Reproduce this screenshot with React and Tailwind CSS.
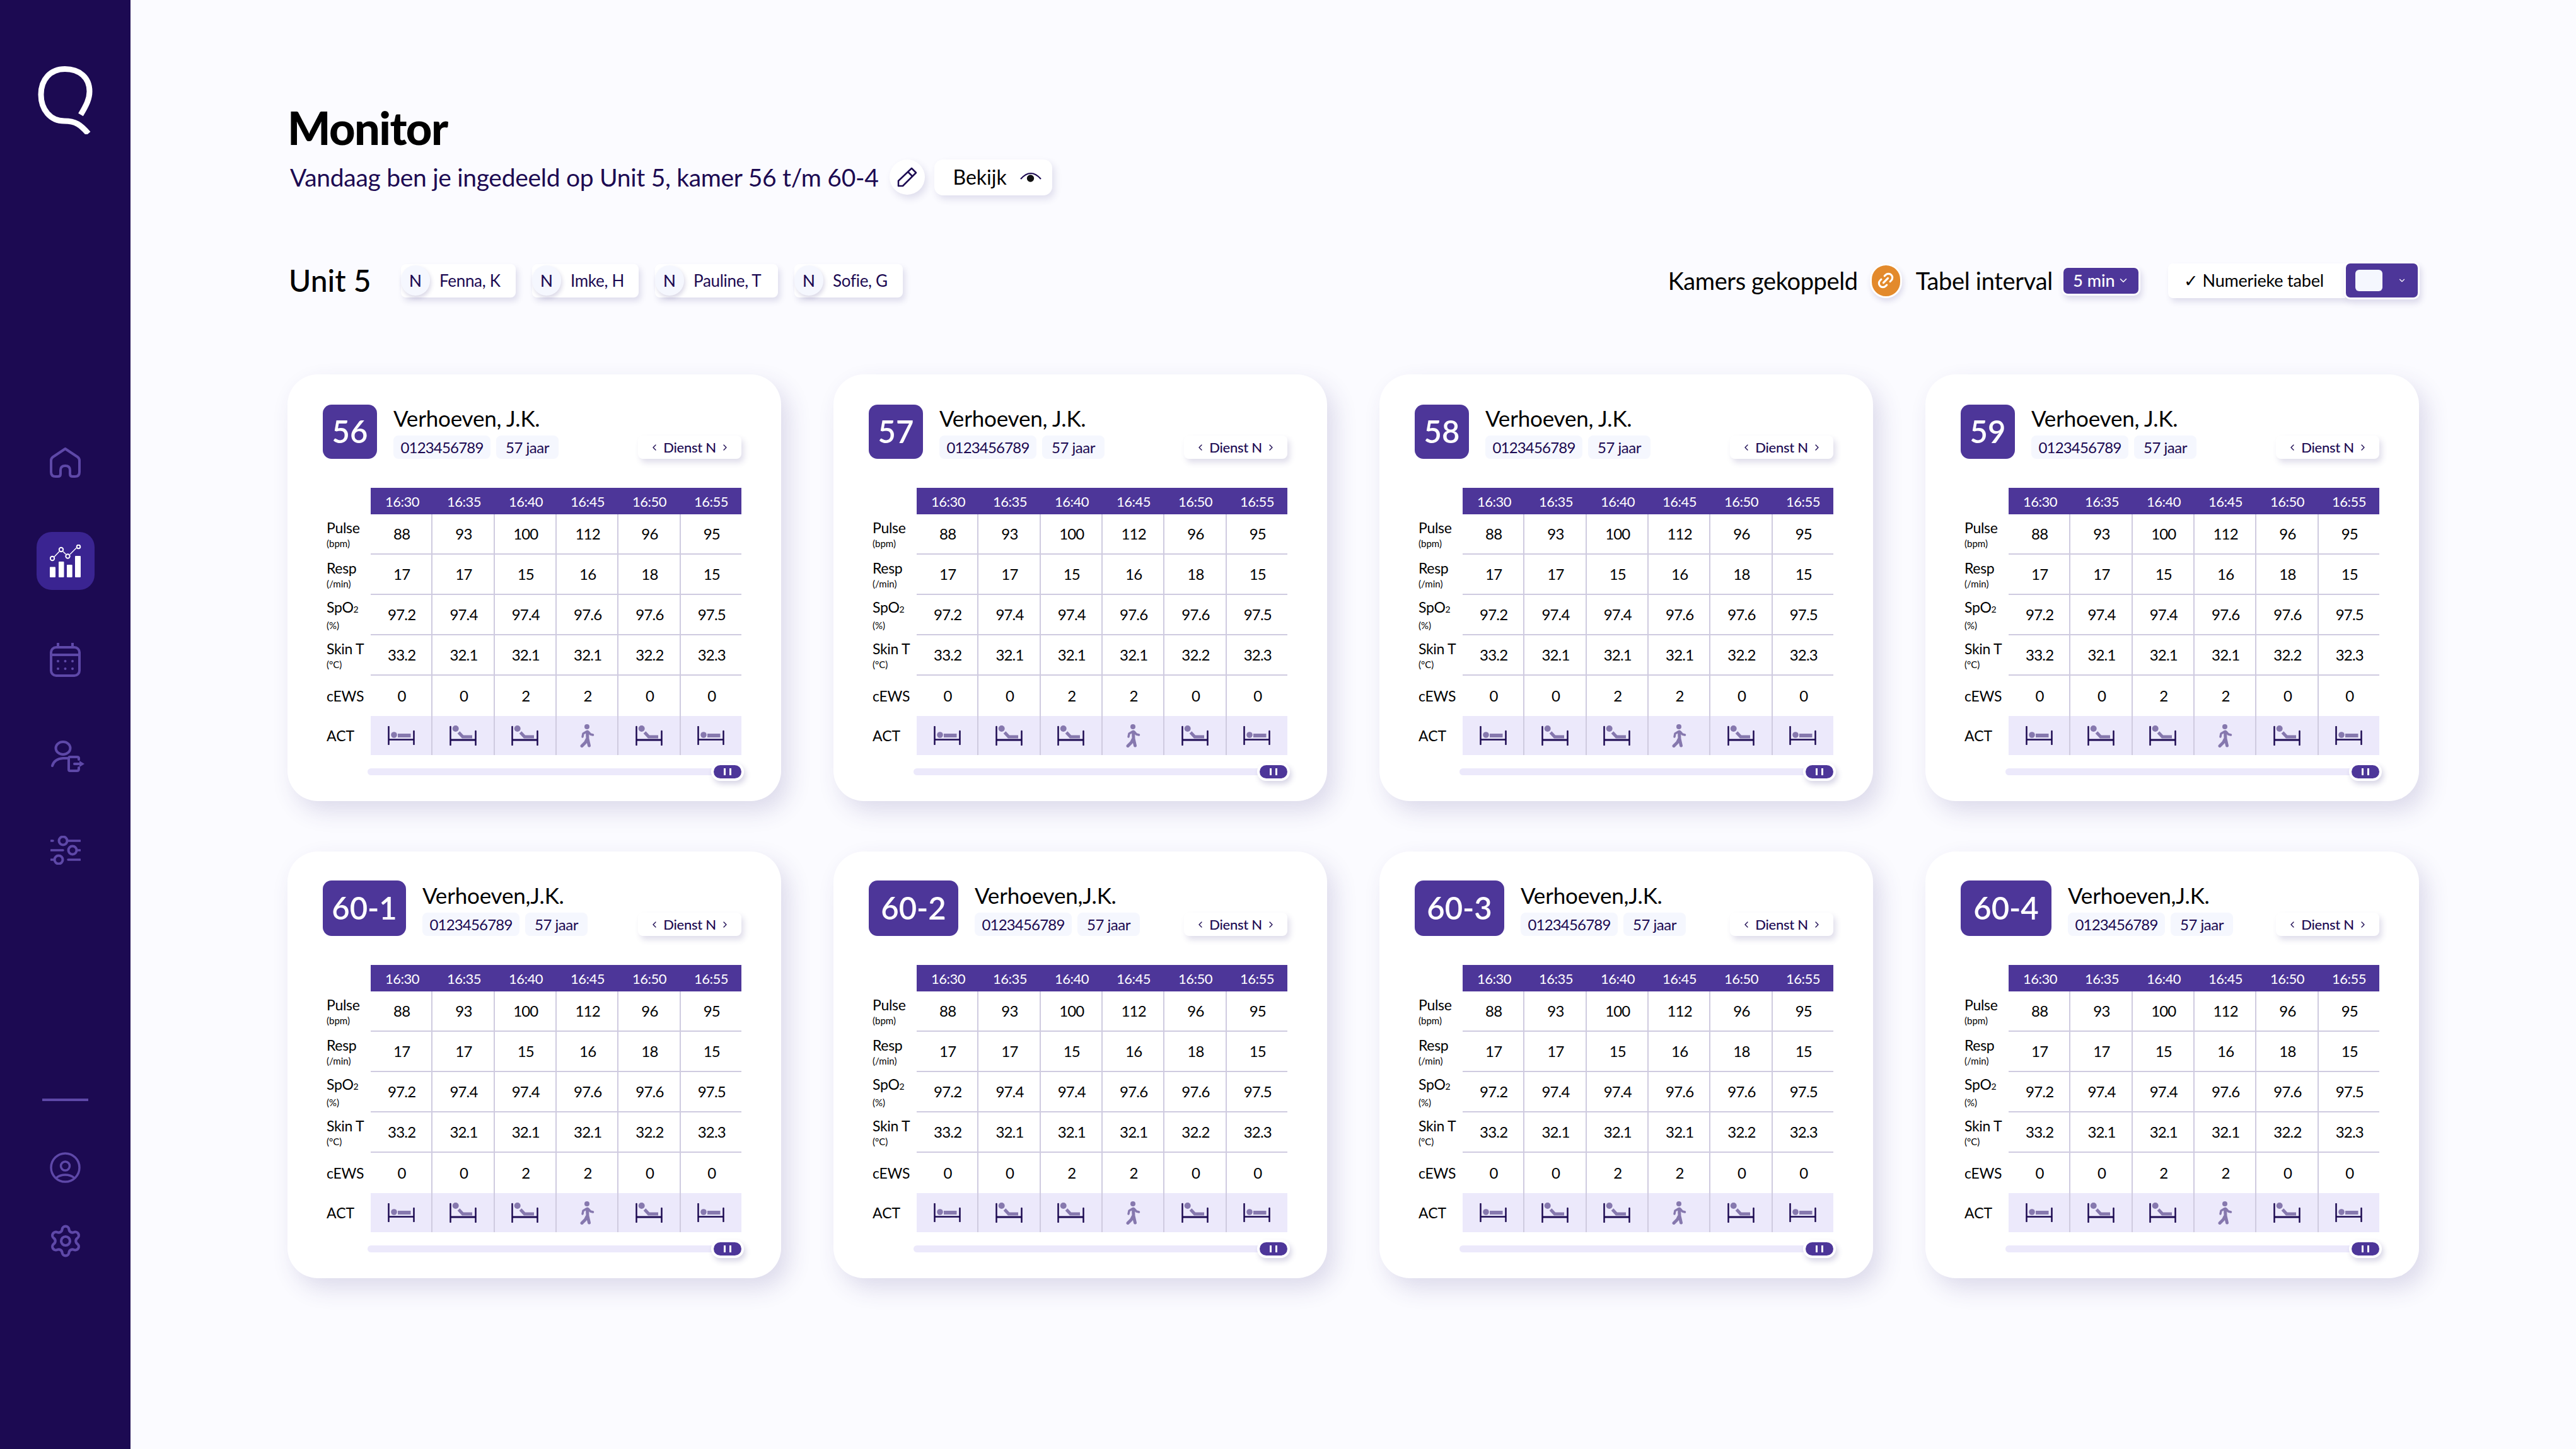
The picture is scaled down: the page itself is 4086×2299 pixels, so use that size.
import { Link2, Settings, ChevronDown, ChevronLeft, ChevronRight } from 'lucide-react';

const times = ['16:30', '16:35', '16:40', '16:45', '16:50', '16:55'];

const rows = [
  { label: 'Pulse', unit: '(bpm)', values: ['88', '93', '100', '112', '96', '95'] },
  { label: 'Resp', unit: '(/min)', values: ['17', '17', '15', '16', '18', '15'] },
  { label: 'SpO', sub: '2', unit: '(%)', values: ['97.2', '97.4', '97.4', '97.6', '97.6', '97.5'] },
  { label: 'Skin T', unit: '(°C)', values: ['33.2', '32.1', '32.1', '32.1', '32.2', '32.3'] },
  { label: 'cEWS', values: ['0', '0', '2', '2', '0', '0'] },
];

const activity = ['flat', 'sit', 'sit', 'walk', 'sit', 'flat'];

const beds = [
  { room: '56', name: 'Verhoeven, J.K.', badge: 'w-[86px] h-[86px] mt-[2px]' },
  { room: '57', name: 'Verhoeven, J.K.', badge: 'w-[86px] h-[86px] mt-[2px]' },
  { room: '58', name: 'Verhoeven, J.K.', badge: 'w-[86px] h-[86px] mt-[2px]' },
  { room: '59', name: 'Verhoeven, J.K.', badge: 'w-[86px] h-[86px] mt-[2px]' },
  { room: '60-1', name: 'Verhoeven,J.K.', badge: 'w-[132px] h-[88px]' },
  { room: '60-2', name: 'Verhoeven,J.K.', badge: 'w-[142px] h-[88px]' },
  { room: '60-3', name: 'Verhoeven,J.K.', badge: 'w-[142px] h-[88px]' },
  { room: '60-4', name: 'Verhoeven,J.K.', badge: 'w-[144px] h-[88px]' },
];

const staff = [
  { name: 'Fenna, K', width: 'w-[182px]' },
  { name: 'Imke, H', width: 'w-[169px]' },
  { name: 'Pauline, T', width: 'w-[195px]' },
  { name: 'Sofie, G', width: 'w-[172px]' },
];

function QLogo() {
  return (
    <svg width="87" height="108" viewBox="0 0 87 108" fill="none" stroke="#fff" strokeWidth="9">
      <path d="M68 77C77 62 82 52 82 40C82 18 66 4.500 43 4.500C20 4.500 5 21 5 45C5 69 20 87 42 87C60 87 68 93 80 107" />
    </svg>
  );
}

function HomeIcon() {
  return (
    <svg width="49" height="48" viewBox="0 0 49 48" fill="none" stroke="#5E48A8" strokeWidth="4" strokeLinejoin="round">
      <path d="M24.500 2L44 15Q47 17 47 21V39Q47 46 40 46H36Q32 46 32 42V36Q32 29 24.500 29Q17 29 17 36V42Q17 46 13 46H9Q2 46 2 39V21Q2 17 5 15Z" />
    </svg>
  );
}

function ChartIcon() {
  return (
    <svg width="50" height="52" viewBox="0 0 50 52" fill="none">
      <g fill="#fff">
        <rect x="0" y="35.500" width="9" height="16.500" rx="1" />
        <rect x="14" y="27" width="8.500" height="25" rx="1" />
        <rect x="27" y="32" width="8.700" height="20" rx="1" />
        <rect x="40" y="18" width="9" height="34" rx="1" />
      </g>
      <path d="M7 19.500L15 11M21 11L25.500 15.500M32 15.500L42 5.500" stroke="#fff" strokeWidth="1.500" />
      <g stroke="#fff" strokeWidth="2">
        <circle cx="4" cy="22" r="3.200" />
        <circle cx="18" cy="8" r="3.200" />
        <circle cx="28.500" cy="18.500" r="3.200" />
        <circle cx="45.500" cy="3.500" r="2.800" />
      </g>
    </svg>
  );
}

function CalendarIcon() {
  return (
    <svg width="49" height="54" viewBox="0 0 49 54" fill="none" stroke="#5E48A8" strokeWidth="4">
      <rect x="2" y="7" width="45" height="45" rx="8" />
      <path d="M2 19H47M13 0V7M36 0V7" />
      <g fill="#5E48A8" stroke="none">
        <circle cx="13" cy="29" r="2" /><circle cx="24.500" cy="29" r="2" /><circle cx="36" cy="29" r="2" />
        <circle cx="13" cy="41" r="2" /><circle cx="24.500" cy="41" r="2" /><circle cx="36" cy="41" r="2" />
      </g>
    </svg>
  );
}

function PersonExitIcon() {
  return (
    <svg width="53" height="50" viewBox="0 0 53 50" fill="none" stroke="#5E48A8" strokeWidth="4" strokeLinecap="round" className="ml-[8px]">
      <ellipse cx="19" cy="12" rx="11.500" ry="10" />
      <path d="M2 40Q5 29 19 28H28" />
      <path d="M44 30V28Q44 26 41 26H30Q28 26 28 28V46Q28 48 30 48H41Q44 48 44 45V43" />
      <path d="M37 37H46" />
      <path d="M45 32L53 37L45 42Z" fill="#5E48A8" stroke="none" />
    </svg>
  );
}

function SlidersIcon() {
  return (
    <svg width="48" height="46" viewBox="0 0 48 46" fill="none" stroke="#5E48A8" strokeWidth="3.500" strokeLinecap="round">
      <path d="M1 8H4M28 8H47M1 23H20M42 23H47M1 38H5M28 38H47" />
      <circle cx="20" cy="8" r="6.500" strokeWidth="4" />
      <circle cx="35" cy="23" r="6.500" strokeWidth="4" />
      <circle cx="13" cy="38" r="6.500" strokeWidth="4" />
    </svg>
  );
}

function ProfileIcon() {
  return (
    <svg width="49" height="49" viewBox="0 0 49 49" fill="none" stroke="#5E48A8" strokeWidth="3.500">
      <circle cx="24.500" cy="24.500" r="22.500" />
      <circle cx="24.500" cy="22" r="7" />
      <path d="M10 41Q16 36 24.500 36Q33 36 39 41" />
    </svg>
  );
}

function PencilIcon() {
  return (
    <svg width="32" height="32" viewBox="0 0 32 32" fill="none" stroke="#1C0A52" strokeWidth="2.500" strokeLinejoin="round">
      <path d="M2 22L23 2L30 9L9 30H2Z" />
      <path d="M17 7.500L24.500 15" />
    </svg>
  );
}

function BedIcon({ kind }) {
  if (kind === 'walk') {
    return (
      <svg width="23" height="37" viewBox="0 0 23 37" fill="none" stroke="#8678AE" strokeWidth="5" strokeLinecap="round" strokeLinejoin="round">
        <circle cx="11" cy="4" r="4" fill="#8678AE" stroke="none" />
        <path d="M11.500 12L12 23L14.500 34M11 24L8.500 29L3 34.500" />
        <path d="M10 12L5 15L4 20M13 12L16.500 16L20.500 17" strokeWidth="3.500" />
      </svg>
    );
  }
  if (kind === 'sit') {
    return (
      <svg width="43" height="32" viewBox="0 0 43 32" fill="none">
        <circle cx="9.700" cy="5" r="5" fill="#8678AE" />
        <path d="M14.500 11L21 18H36" stroke="#8678AE" strokeWidth="5" />
        <path d="M1.500 2V31M41.500 9V31" stroke="#1C0A52" strokeWidth="2.500" strokeLinecap="round" />
        <path d="M1.500 23H41.500" stroke="#1C0A52" strokeWidth="3" />
      </svg>
    );
  }
  return (
    <svg width="43" height="30" viewBox="0 0 43 30" fill="none">
      <circle cx="10" cy="14" r="4.800" fill="#8678AE" />
      <rect x="16" y="12" width="20.500" height="6" fill="#8678AE" />
      <path d="M1.500 1V29M41.500 8V29" stroke="#1C0A52" strokeWidth="2.500" strokeLinecap="round" />
      <path d="M1.500 21.500H41.500" stroke="#1C0A52" strokeWidth="2.500" />
    </svg>
  );
}

function MonitorCard({ bed }) {
  return (
    <div className="w-[783px] h-[677px] bg-white rounded-[48px] pt-[46px] pl-[56px] pr-[63px] shadow-[12px_16px_36px_rgba(60,50,130,0.16)]">
      <div className="h-[134px] flex items-start">
        <div className={`${bed.badge} shrink-0 bg-[#4D3699] rounded-[14px] flex items-center justify-center text-white text-[49px] font-semibold`}>
          {bed.room}
        </div>
        <div className="ml-[26px] flex-1 h-[88px] flex flex-col justify-between">
          <div className="text-[35px] leading-[40px] mt-[3px] text-black tracking-[-0.2px]">{bed.name}</div>
          <div className="flex items-center">
            <span className="h-[37px] w-[154px] rounded-[8px] bg-[#F5F7FE] text-[#1C0A52] text-[24px] tracking-[-0.8px] flex items-center justify-center">0123456789</span>
            <span className="ml-[9px] h-[37px] w-[99px] rounded-[8px] bg-[#F5F7FE] text-[#1C0A52] text-[24px] tracking-[-0.5px] flex items-center justify-center">57 jaar</span>
            <span className="ml-auto h-[37px] w-[164px] rounded-[8px] bg-white text-[#1C0A52] text-[22px] font-medium tracking-[-0.3px] flex items-center justify-center gap-[6px] shadow-[4px_6px_10px_rgba(60,50,130,0.16)]">
              <ChevronLeft size={16} strokeWidth={2} />
              Dienst N
              <ChevronRight size={16} strokeWidth={2} />
            </span>
          </div>
        </div>
      </div>

      <div className="flex">
        <div className="w-[76px] shrink-0" />
        <div className="flex-1 h-[42px] bg-[#4D3699] flex">
          {times.map((t) => (
            <div key={t} className="flex-1 pl-[2px] flex items-center justify-center text-white text-[22px] tracking-[-0.5px]">{t}</div>
          ))}
        </div>
      </div>

      {rows.map((row, i) => (
        <div key={row.label} className="flex h-[64px]">
          <div className="w-[76px] shrink-0 pl-[6px] flex flex-col justify-center text-black">
            <div className="text-[23px] leading-[26px] tracking-[-0.3px] whitespace-nowrap">
              {row.label}
              {row.sub && <span className="text-[14px]">{row.sub}</span>}
            </div>
            {row.unit && <div className="text-[15px] leading-[20px] mt-[2px]">{row.unit}</div>}
          </div>
          <div className={`flex-1 flex ${i < 4 ? 'border-b-2 border-[#CFCBE0]' : ''}`}>
            {row.values.map((v, j) => (
              <div key={j} className={`flex-1 pl-[2px] flex items-center justify-center text-black text-[24px] tracking-[-0.8px] ${j > 0 ? 'border-l-2 border-[#CFCBE0]' : ''}`}>
                {v}
              </div>
            ))}
          </div>
        </div>
      ))}

      <div className="flex h-[62px]">
        <div className="w-[76px] shrink-0 pl-[6px] flex items-center text-black text-[23px]">ACT</div>
        <div className="flex-1 flex bg-[#ECE9FB]">
          {activity.map((kind, j) => (
            <div key={j} className={`flex-1 flex items-center justify-center ${j > 0 ? 'border-l-2 border-[#CFCBE0]' : ''}`}>
              <BedIcon kind={kind} />
            </div>
          ))}
        </div>
      </div>

      <div className="relative mt-[21px] ml-[71px] h-[11px] rounded-full bg-[#ECE9FB]">
        <div className="absolute right-[-4px] top-[-9px] w-[52px] h-[29px] rounded-full bg-[#4D3699] border-4 border-white flex items-center justify-center gap-[6px] shadow-[3px_5px_8px_rgba(60,50,130,0.2)]">
          <span className="w-[3px] h-[11px] bg-white" />
          <span className="w-[3px] h-[11px] bg-white" />
        </div>
      </div>
    </div>
  );
}

export default function App() {
  return (
    <div className="w-full min-h-[2299px] flex bg-[#FBFBFF] text-black" style={{ fontFamily: 'Lato, sans-serif' }}>
      <aside className="w-[207px] shrink-0 bg-[#1C0A52] flex flex-col items-center">
        <div className="mt-[105px]"><QLogo /></div>
        <div className="mt-[497px]"><HomeIcon /></div>
        <div className="mt-[86px] w-[92px] h-[92px] rounded-[24px] bg-[#3A2491] flex items-center justify-center"><ChartIcon /></div>
        <div className="mt-[84px]"><CalendarIcon /></div>
        <div className="mt-[101px]"><PersonExitIcon /></div>
        <div className="mt-[101px]"><SlidersIcon /></div>
        <div className="mt-[371px] w-[73px] h-[4px] bg-[#5E48A8]" />
        <div className="mt-[81px]"><ProfileIcon /></div>
        <div className="mt-[64px] -mb-[4px]"><Settings size={56} color="#5E48A8" strokeWidth={1.8} /></div>
      </aside>

      <main className="flex-1 pl-[249px] pr-[248px] pt-[164px]">
        <h1 className="text-[72px] leading-[76px] font-black tracking-[-1.5px]">Monitor</h1>

        <div className="mt-[11px] flex items-center h-[60px]">
          <p className="ml-[4px] text-[39px] text-[#1C0A52] tracking-[-0.3px] whitespace-nowrap">Vandaag ben je ingedeeld op Unit 5, kamer 56 t/m 60-4</p>
          <span className="ml-[18px] w-[56px] h-[56px] rounded-full bg-white flex items-center justify-center shadow-[4px_6px_12px_rgba(60,50,130,0.14)]">
            <PencilIcon />
          </span>
          <span className="ml-[15px] w-[187px] h-[57px] rounded-[14px] bg-white flex items-center pl-[29px] text-[32px] shadow-[4px_6px_12px_rgba(60,50,130,0.14)]">
            Bekijk
            <svg width="34" height="18" viewBox="0 0 34 18" fill="none" className="ml-[21px]">
              <path d="M1 12Q17 -6 33 12" stroke="#1C0A52" strokeWidth="2.200" />
              <circle cx="16.500" cy="11" r="5.700" fill="#111" />
            </svg>
          </span>
        </div>

        <div className="mt-[104px] flex items-center h-[60px]">
          <h2 className="ml-[2px] text-[48px] font-medium w-[178px] whitespace-nowrap">Unit 5</h2>
          <div className="flex gap-[26px]">
            {staff.map((s) => (
              <div key={s.name} className={`${s.width} h-[53px] bg-white rounded-[8px] flex items-center shadow-[4px_6px_10px_rgba(60,50,130,0.14)]`}>
                <span className="w-[46px] h-[48px] rounded-full bg-[#F5F7FE] flex items-center justify-center text-[#1C0A52] text-[26px] font-medium shadow-[2px_4px_6px_rgba(60,50,130,0.18)]">N</span>
                <span className="ml-[15px] text-[26px] text-[#1C0A52] tracking-[-0.3px] whitespace-nowrap">{s.name}</span>
              </div>
            ))}
          </div>

          <div className="ml-auto flex items-center">
            <span className="text-[38px] tracking-[-0.4px] whitespace-nowrap">Kamers gekoppeld</span>
            <span className="ml-[19px] w-[51px] h-[55px] rounded-full bg-[#E38A2C] border-[3px] border-white flex items-center justify-center text-white shadow-[2px_5px_8px_rgba(60,50,130,0.16)]">
              <Link2 size={30} strokeWidth={2.500} className="-rotate-45" />
            </span>
            <span className="ml-[22px] text-[38px] tracking-[-0.3px] whitespace-nowrap">Tabel interval</span>
            <span className="ml-[14px] w-[125px] h-[47px] rounded-[10px] bg-[#4D3699] border-[3px] border-white flex items-center justify-center gap-[4px] text-white text-[27px] font-medium shadow-[3px_6px_10px_rgba(60,50,130,0.16)]">
              5 min
              <ChevronDown size={18} strokeWidth={2} />
            </span>
            <div className="ml-[44px] flex items-center">
              <span className="w-[281px] h-[55px] bg-white rounded-l-[8px] flex items-center pl-[25px] text-[27px] tracking-[-0.2px] whitespace-nowrap shadow-[4px_6px_10px_rgba(60,50,130,0.14)]">✓ Numerieke tabel</span>
              <span className="w-[120px] h-[60px] rounded-[10px] bg-[#4D3699] border-[3px] border-white flex items-center pl-[15px] shadow-[3px_6px_10px_rgba(60,50,130,0.16)] -ml-[2px]">
                <span className="w-[43px] h-[34px] rounded-[6px] bg-[#F5F7FE]" />
                <ChevronDown size={14} color="#fff" strokeWidth={2} className="ml-[24px]" />
              </span>
            </div>
          </div>
        </div>

        <div className="mt-[119px] grid grid-cols-[repeat(4,783px)] gap-x-[83px] gap-y-[80px]">
          {beds.map((bed) => (
            <MonitorCard key={bed.room} bed={bed} />
          ))}
        </div>
      </main>
    </div>
  );
}
